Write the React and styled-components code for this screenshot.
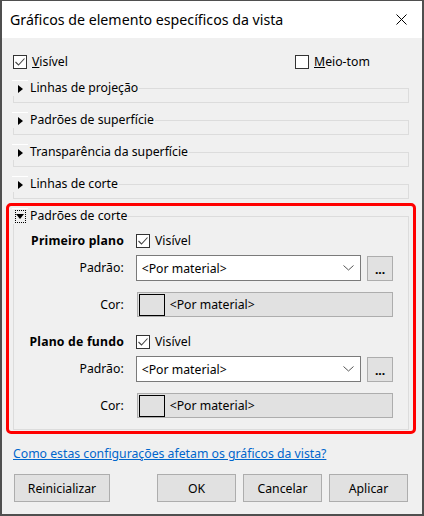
import React from 'react';
import styled, { createGlobalStyle } from 'styled-components';

const GlobalStyle = createGlobalStyle`
  html, body { margin: 0; padding: 0; background: #fff; }
  body {
    font-family: "Noto Sans", "Segoe UI", sans-serif;
    font-size: 12.25px;
    color: #000;
  }
  * { box-sizing: border-box; }
`;

const Window = styled.div`
  width: 424px;
  height: 516px;
  border: 2px solid #4f4f4f;
  border-top-width: 1px;
  display: flex;
  flex-direction: column;
  background: #f0f0f0;
`;

const TitleBar = styled.div`
  height: 37px;
  background: #fff;
  display: flex;
  align-items: center;
  justify-content: space-between;
  padding-left: 8px;
  font-size: 14.2px;
`;

const CloseButton = styled.div`
  width: 42px;
  height: 37px;
  display: flex;
  align-items: center;
  justify-content: center;
`;

const Body = styled.div`
  flex: 1;
  display: flex;
  flex-direction: column;
  padding: 16px 13px 11px 11px;
`;

const TopRow = styled.div`
  display: grid;
  grid-template-columns: 282px auto;
  height: 16px;
  align-items: center;
`;

const CheckLabel = styled.label`
  display: flex;
  align-items: center;
  gap: 5px;
  line-height: 16px;
`;

const Box = styled.span`
  width: 14px;
  height: 14px;
  border: 1px solid #333;
  background: #fff;
  display: flex;
  align-items: center;
  justify-content: center;
`;

const Groups = styled.div`
  display: flex;
  flex-direction: column;
  gap: 9px;
  margin-top: 10px;
`;

const Group = styled.fieldset`
  margin: 0;
  min-width: 0;
  border: 1px solid #dcdcdc;
  padding: ${p => (p.$open ? '9px 15px 11px 0' : '0 0 6px 0')};
`;

const Legend = styled.legend`
  display: flex;
  align-items: center;
  height: 16px;
  line-height: 16px;
  padding: 0 1px 0 0;
  margin-left: -2px;
`;

const Toggle = styled.span`
  width: 16px;
  height: 16px;
  margin-right: 2px;
  border-top: 1px solid #fff;
  display: flex;
  align-items: center;
  justify-content: center;
`;

const ArrowRight = styled.span`
  width: 0;
  height: 0;
  border-left: 5px solid #000;
  border-top: 4.5px solid transparent;
  border-bottom: 4.5px solid transparent;
  margin-left: 1px;
`;

const FocusBox = styled.span`
  width: 11px;
  height: 13px;
  border: 1px dotted #000;
  display: flex;
  align-items: center;
  justify-content: center;
`;

const ArrowDown = styled.span`
  width: 0;
  height: 0;
  border-top: 5px solid #000;
  border-left: 4px solid transparent;
  border-right: 4px solid transparent;
`;

const Highlight = styled.div`
  border: 3px solid #f00;
  border-radius: 5px;
  margin: -5px -7px -4px -7px;
  padding: 2px 4px 1px 4px;
`;

const Row = styled.div`
  display: flex;
  align-items: center;
  margin-top: ${p => p.$gap || 0}px;
`;

const RowLabel = styled.span`
  width: 110px;
  margin-right: 12px;
  text-align: right;
  font-weight: ${p => (p.$bold ? 700 : 400)};
  letter-spacing: ${p => (p.$bold ? '0.2px' : '0')};
  line-height: 16px;
`;

const Combo = styled.div`
  width: 226px;
  height: 26px;
  background: #fff;
  border: 1px solid #7a7a7a;
  display: flex;
  align-items: center;
  justify-content: space-between;
  padding: 0 6px 0 5px;
`;

const SmallButton = styled.div`
  width: 26px;
  height: 25px;
  margin: 1px 0 0 6px;
  background: #e1e1e1;
  border: 1px solid #adadad;
  display: flex;
  align-items: flex-end;
  justify-content: center;
  padding-bottom: 4px;
  font-weight: 700;
  line-height: 12px;
`;

const ColorField = styled.div`
  width: 257px;
  height: 25px;
  margin-left: 1px;
  background: #e1e1e1;
  border: 1px solid #adadad;
  display: flex;
  align-items: center;
  gap: 5px;
  padding-left: 1px;
`;

const Swatch = styled.span`
  width: 26px;
  height: 22px;
  border: 1px solid #000;
  background: #e1e1e1;
`;

const HelpLink = styled.a`
  margin-top: 16px;
  line-height: 16px;
  color: #0066cc;
  text-decoration: underline;
  align-self: flex-start;
`;

const ButtonRow = styled.div`
  display: flex;
  gap: 7px;
  margin-top: 12px;
  padding: 0 1px;
`;

const Button = styled.div`
  width: ${p => p.$w || 79}px;
  height: 28px;
  background: #e1e1e1;
  border: 1px solid #adadad;
  display: flex;
  align-items: center;
  justify-content: center;
  margin-right: ${p => p.$push ? 'auto' : '0'};
`;

const Check = ({ checked, children }) => (
  <CheckLabel>
    <Box>
      {checked && (
        <svg width="12" height="12" viewBox="0 0 12 12">
          <path d="M1.5 6 L4.5 9 L10.5 2.5" fill="none" stroke="#444" strokeWidth="1.1" />
        </svg>
      )}
    </Box>
    <span>{children}</span>
  </CheckLabel>
);

const Chevron = () => (
  <svg width="11" height="6" viewBox="0 0 11 6">
    <path d="M0.5 0.5 L5.5 5 L10.5 0.5" fill="none" stroke="#555" strokeWidth="1" />
  </svg>
);

const Collapsed = ({ title }) => (
  <Group>
    <Legend>
      <Toggle><ArrowRight /></Toggle>
      {title}
    </Legend>
  </Group>
);

const Layer = ({ title, first }) => (
  <>
    <Row $gap={first ? 0 : 17}>
      <RowLabel $bold>{title}</RowLabel>
      <Check checked>Visível</Check>
    </Row>
    <Row $gap={6}>
      <RowLabel>Padrão:</RowLabel>
      <Combo>
        <span>&lt;Por material&gt;</span>
        <Chevron />
      </Combo>
      <SmallButton>...</SmallButton>
    </Row>
    <Row $gap={11}>
      <RowLabel>Cor:</RowLabel>
      <ColorField>
        <Swatch />
        <span>&lt;Por material&gt;</span>
      </ColorField>
    </Row>
  </>
);

export default function App() {
  return (
    <>
      <GlobalStyle />
      <Window>
        <TitleBar>
          <span>Gráficos de elemento específicos da vista</span>
          <CloseButton>
            <svg width="11" height="11" viewBox="0 0 11 11">
              <path d="M0.5 0.5 L10.5 10.5 M10.5 0.5 L0.5 10.5" stroke="#000" strokeWidth="1" />
            </svg>
          </CloseButton>
        </TitleBar>
        <Body>
          <TopRow>
            <Check checked><u>V</u>isível</Check>
            <Check><u>M</u>eio-tom</Check>
          </TopRow>
          <Groups>
            <Collapsed title="Linhas de projeção" />
            <Collapsed title="Padrões de superfície" />
            <Collapsed title="Transparência da superfície" />
            <Collapsed title="Linhas de corte" />
            <Highlight>
              <Group $open>
                <Legend>
                  <Toggle><FocusBox><ArrowDown /></FocusBox></Toggle>
                  Padrões de corte
                </Legend>
                <Layer title="Primeiro plano" first />
                <Layer title="Plano de fundo" />
              </Group>
            </Highlight>
          </Groups>
          <HelpLink href="#">Como estas configurações afetam os gráficos da vista?</HelpLink>
          <ButtonRow>
            <Button $w={96} $push>Reinicializar</Button>
            <Button>OK</Button>
            <Button>Cancelar</Button>
            <Button>Aplicar</Button>
          </ButtonRow>
        </Body>
      </Window>
    </>
  );
}
